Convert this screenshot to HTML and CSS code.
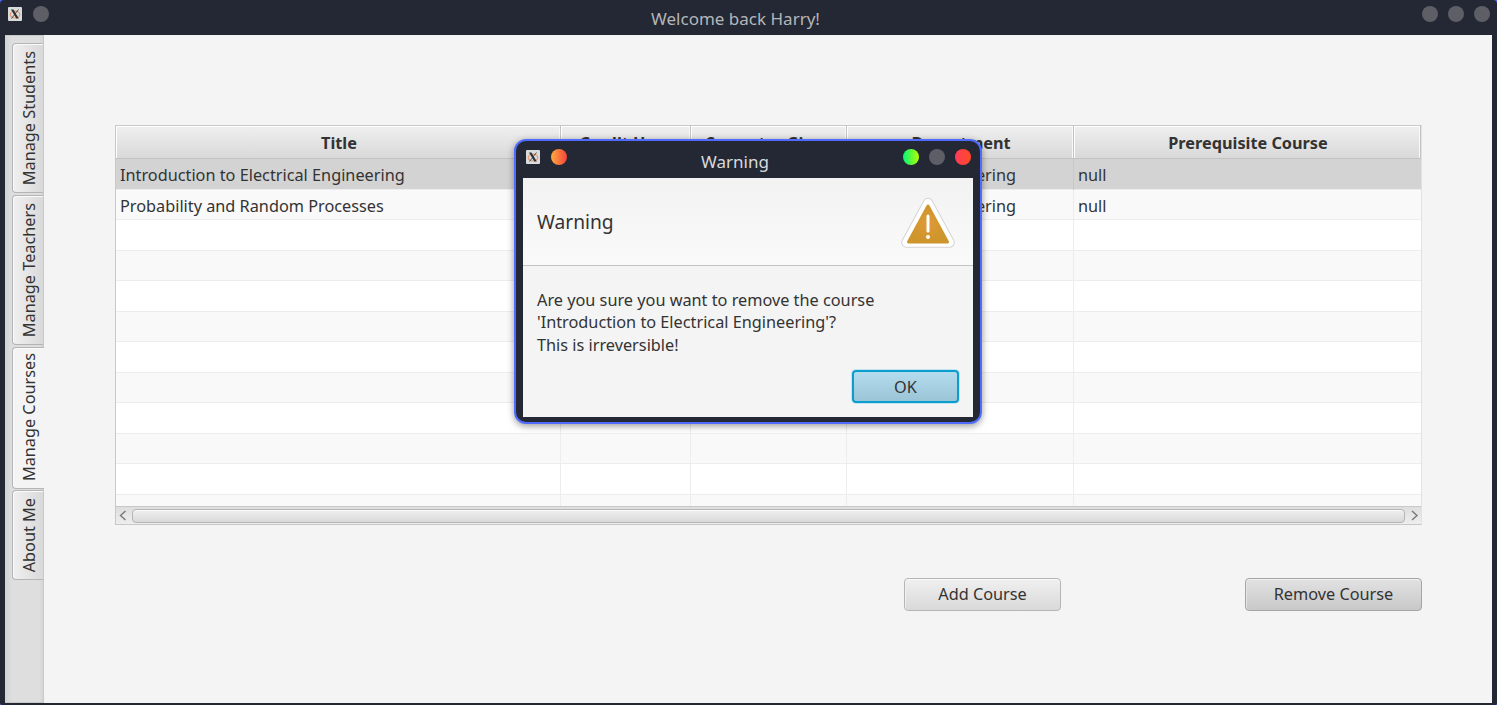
FILE: index.html
```
<!DOCTYPE html>
<html lang="en">
<head>
<meta charset="utf-8">
<title>Welcome back Harry!</title>
<link rel="stylesheet" href="styles.css">
</head>
<body>
<div class="window">
  <header class="titlebar">
    <svg class="app-icon" viewBox="0 0 14 14"><rect width="14" height="14" rx="1" fill="#d9dcdd"/><ellipse cx="7" cy="7.600" rx="4.800" ry="3.400" fill="none" stroke="#ec9468" stroke-width="1.200"/><path d="M3 2.500h2.400l5.400 9H8.300z" fill="#2a2f33"/><path d="M10.500 2.500 3.500 11.500" stroke="#2a2f33" stroke-width=".8"/></svg>
    <i class="dot"></i>
    <h1 class="window-title">Welcome back Harry!</h1>
    <i class="dot"></i><i class="dot"></i><i class="dot"></i>
  </header>
  <div class="client">
    <nav class="tabs">
      <a class="tab students"><span>Manage Students</span></a>
      <a class="tab teachers"><span>Manage Teachers</span></a>
      <a class="tab courses active"><span>Manage Courses</span></a>
      <a class="tab about"><span>About Me</span></a>
    </nav>
    <main class="content">
      <section class="table">
        <div class="head">
          <div>Title</div><div>Credit Hour</div><div>Semester Given</div><div>Department</div><div>Prerequisite Course</div>
        </div>
        <div class="rows">
          <div class="row selected"><div>Introduction to Electrical Engineering</div><div></div><div></div><div>Electrical Engineering</div><div>null</div></div>
          <div class="row"><div>Probability and Random Processes</div><div></div><div></div><div>Electrical Engineering</div><div>null</div></div>
          <div class="row"><div></div><div></div><div></div><div></div><div></div></div>
          <div class="row"><div></div><div></div><div></div><div></div><div></div></div>
          <div class="row"><div></div><div></div><div></div><div></div><div></div></div>
          <div class="row"><div></div><div></div><div></div><div></div><div></div></div>
          <div class="row"><div></div><div></div><div></div><div></div><div></div></div>
          <div class="row"><div></div><div></div><div></div><div></div><div></div></div>
          <div class="row"><div></div><div></div><div></div><div></div><div></div></div>
          <div class="row"><div></div><div></div><div></div><div></div><div></div></div>
          <div class="row"><div></div><div></div><div></div><div></div><div></div></div>
          <div class="row"><div></div><div></div><div></div><div></div><div></div></div>
        </div>
        <div class="scrollbar">
          <svg class="arrow" viewBox="0 0 16 18"><path d="M9.5 4 4.5 8.500l5 4.500" /></svg>
          <i class="thumb"></i>
          <svg class="arrow" viewBox="0 0 16 18"><path d="M7 4 12 8.500l-5 4.500" /></svg>
        </div>
      </section>
      <div class="actions">
        <button class="button add">Add Course</button>
        <button class="button remove">Remove Course</button>
      </div>
    </main>
  </div>
</div>
<div class="dialog">
  <header class="dialog-bar">
    <svg class="app-icon" viewBox="0 0 14 14"><rect width="14" height="14" rx="1" fill="#d9dcdd"/><ellipse cx="7" cy="7.600" rx="4.800" ry="3.400" fill="none" stroke="#ec9468" stroke-width="1.200"/><path d="M3 2.500h2.400l5.400 9H8.300z" fill="#2a2f33"/><path d="M10.500 2.500 3.500 11.500" stroke="#2a2f33" stroke-width=".8"/></svg>
    <i class="dot orange"></i>
    <h2 class="dialog-title">Warning</h2>
    <i class="dot green"></i><i class="dot"></i><i class="dot red"></i>
  </header>
  <div class="dialog-pane">
    <div class="dialog-head">
      <span>Warning</span>
      <svg class="warning-icon" viewBox="0 0 56 52">
        <defs><radialGradient id="amber"><stop offset="0" stop-color="#e09a38"/><stop offset="1" stop-color="#cd952b"/></radialGradient></defs>
        <path d="M28 6 6.500 45.500H49.500Z" fill="none" stroke="#d4d4d4" stroke-width="10.500" stroke-linejoin="round"/>
        <path d="M28 6 6.500 45.500H49.500Z" fill="#fff" stroke="#fff" stroke-width="8.500" stroke-linejoin="round"/>
        <path d="M28 9 8.500 45H47.500Z" fill="url(#amber)" stroke="url(#amber)" stroke-width="3" stroke-linejoin="round"/>
        <path d="M28 19V34" stroke="#fff" stroke-width="3" stroke-linecap="round"/>
        <circle cx="28" cy="40" r="2" fill="#fff"/>
      </svg>
    </div>
    <div class="dialog-body">
      <p>Are you sure you want to remove the course<br>'Introduction to Electrical Engineering'?<br>This is irreversible!</p>
      <button class="button ok">OK</button>
    </div>
  </div>
</div>
</body>
</html>
```
FILE: styles.css
```
* { box-sizing: border-box; }
body {
  margin: 0;
  width: 1497px;
  height: 705px;
  overflow: hidden;
  background: #4f6bff;
  color: #333;
  font: 16.270px/22px "Noto Sans", sans-serif;
}
h1, h2, p { margin: 0; }
.window {
  display: flex;
  flex-direction: column;
  height: 705px;
  padding: 0 5px 2px;
  background: #232834;
  border-radius: 4px 4px 2px 2px;
}
.titlebar {
  display: flex;
  align-items: flex-start;
  gap: 10px;
  height: 35px;
  padding: 6px 2px 0 3px;
}
.app-icon { width: 14px; height: 14px; margin-top: 1px; flex: none; }
.dot { width: 16px; height: 16px; border-radius: 50%; background: #5e5e66; flex: none; }
.titlebar .app-icon + .dot { margin-left: 1px; }
.window-title {
  flex: 1;
  padding-top: 2px;
  text-align: center;
  font-size: 17px;
  font-weight: 400;
  color: #b4b6b9;
}
.client { display: flex; flex: 1; background: #f4f4f4; }
.tabs {
  display: flex;
  flex-direction: column;
  gap: 2px;
  width: 39px;
  padding: 8px 0 0 7px;
  border-top: 1px solid #c8c8c8;
  border-right: 1px solid #c8c8c8;
  border-bottom: 1px solid #c8c8c8;
  background: linear-gradient(90deg, #d2d2d2, #dedede 7px, #dedede 34px, #d5d5d5);
}
.tab {
  display: flex;
  align-items: center;
  justify-content: center;
  border: 1px solid #b5b5b5;
  border-right: 0;
  border-radius: 4px 0 0 4px;
  background: linear-gradient(90deg, #f0f0f0, #d9d9d9);
  box-shadow: inset 1px 1px #fafafa;
}
.tab span { writing-mode: vertical-rl; transform: rotate(180deg); white-space: nowrap; margin-left: 1px; }
.students { height: 150px; margin-top: -1px; }
.teachers { height: 150px; }
.courses { height: 142px; padding-bottom: 2px; }
.about { height: 90px; margin-top: -1px; }
.tab.active { background: #f4f4f4; margin-right: -1px; padding-right: 1px; }
.content { flex: 1; padding: 90px 70px 0 71px; }
.table { height: 400px; border: 1px solid #c8c8c8; border-right-color: #e2e2e2; background: #fff; }
.head, .row { display: grid; grid-template-columns: 445px 130px 156px 227px 1fr; }
.head {
  height: 33px;
  font-weight: 700;
  text-align: center;
  line-height: 34px;
  background: linear-gradient(#efefef, #d9d9d9);
  border-bottom: 1px solid #c3c3c3;
}
.head div { height: 32px; padding-left: 2px; border-right: 1px solid #c3c3c3; box-shadow: inset 1px 1px #fff, inset -1px 0 #f8f8f8; }
.rows { height: 347px; overflow: hidden; }
.row { height: 30.500px; line-height: 33px; border-bottom: 1px solid #ededed; background: #fff; }
.row:nth-child(even) { background: #f9f9f9; }
.row.selected { background: #d3d3d3; }
.row div { padding-left: 4px; border-right: 1px solid #ededed; }
.row.selected div { border-color: #c8c8c8; }
.row div:last-child { border-right: 0; }
.scrollbar {
  display: flex;
  align-items: center;
  height: 18px;
  background: linear-gradient(#dedede, #eee);
  border-top: 1px solid #c8c8c8;
}
.arrow { width: 16px; height: 18px; fill: none; stroke: #777; stroke-width: 1.4; }
.thumb {
  flex: 1;
  height: 14px;
  border: 1px solid #b5b5b5;
  border-radius: 4px;
  background: linear-gradient(#f0f0f0, #d9d9d9);
  box-shadow: inset 0 1px #fafafa;
}
.actions { display: flex; justify-content: flex-end; gap: 184px; padding-top: 52.500px; }
.button {
  height: 33px;
  padding: 0;
  border: 1px solid #b5b5b5;
  border-radius: 4px;
  background: linear-gradient(#f0f0f0, #d9d9d9);
  box-shadow: inset 0 1px #fafafa, inset 1px 0 #f0f0f0;
  color: #333;
  font: inherit;
}
.add { width: 157px; }
.remove { width: 177px; border-color: #a5a5a5; background: linear-gradient(#e2e2e2, #c8c8c8); box-shadow: inset 0 1px #f0f0f0, inset 1px 0 #e5e5e5; }
.dialog {
  position: absolute;
  left: 514px;
  top: 139px;
  width: 468px;
  height: 285px;
  padding: 0 7px 5px;
  border: 2px solid #4f6cff;
  border-radius: 12px;
  background: #232834;
  box-shadow: 0 2px 7px rgba(0, 0, 0, .4);
}
.dialog-bar { display: flex; align-items: flex-start; gap: 10px; height: 37px; padding: 8px 2px 0 3px; }
.dialog-bar .app-icon + .dot { margin-left: 1px; }
.dialog-title { flex: 1; padding: 2px 0 0; text-align: center; font-size: 17px; font-weight: 400; color: #d8dadd; }
.orange { background: linear-gradient(90deg, #ffaa3c, #f5433d); }
.green { background: linear-gradient(90deg, #00f57c, #b4ff00); }
.red { background: linear-gradient(90deg, #ff3b5c, #ff4a24); }
.dialog-pane { height: 239px; background: #f4f4f4; }
.dialog-head {
  display: flex;
  align-items: center;
  justify-content: space-between;
  height: 88px;
  padding: 0 17px 0 14px;
  border-bottom: 1px solid #c3c3c3;
  background: linear-gradient(#f2f2f2, #fafafa);
  font-size: 19.200px;
}
.warning-icon { width: 56px; height: 52px; margin-top: 2px; }
.dialog-body { display: flex; flex-direction: column; padding: 23px 14px 0; line-height: 22.400px; }
.ok {
  align-self: flex-end;
  width: 107px;
  margin-top: 14px;
  padding-top: 1px;
  border: 2px solid #0a9dce;
  background: linear-gradient(#b3dcee, #9bc4d7);
  box-shadow: 0 0 0 1px #c4e6f2;
}
```
